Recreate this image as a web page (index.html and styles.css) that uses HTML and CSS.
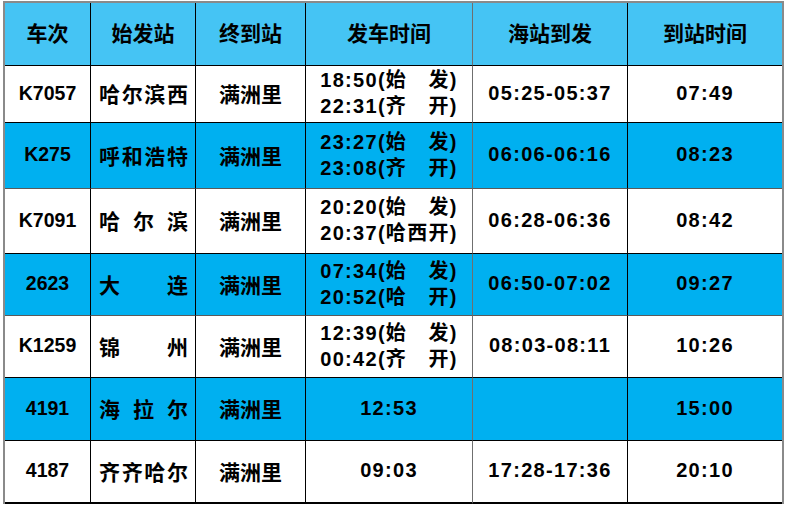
FILE: index.html
```html
<!DOCTYPE html>
<html lang="zh-CN">
<head>
<meta charset="utf-8">
<title>列车时刻表</title>
<link rel="stylesheet" href="styles.css">
</head>
<body>
<div class="wrap">
<table class="tt">
  <thead>
    <tr class="h">
      <th class="c1">车次</th>
      <th class="c2">始发站</th>
      <th class="c3">终到站</th>
      <th class="c4">发车时间</th>
      <th class="c5">海站到发</th>
      <th class="c6">到站时间</th>
    </tr>
  </thead>
  <tbody>
    <tr class="r1">
      <td class="no">K7057</td>
      <td class="st"><span class="dist"><span>哈</span><span>尔</span><span>滨</span><span>西</span></span></td>
      <td class="cj">满洲里</td>
      <td class="dep"><div class="two"><span>18:50(始　发)</span><span>22:31(齐　开)</span></div></td>
      <td class="tm">05:25-05:37</td>
      <td class="tm">07:49</td>
    </tr>
    <tr class="r2 blue">
      <td class="no">K275</td>
      <td class="st"><span class="dist"><span>呼</span><span>和</span><span>浩</span><span>特</span></span></td>
      <td class="cj">满洲里</td>
      <td class="dep"><div class="two"><span>23:27(始　发)</span><span>23:08(齐　开)</span></div></td>
      <td class="tm">06:06-06:16</td>
      <td class="tm">08:23</td>
    </tr>
    <tr class="r3">
      <td class="no">K7091</td>
      <td class="st"><span class="dist"><span>哈</span><span>尔</span><span>滨</span></span></td>
      <td class="cj">满洲里</td>
      <td class="dep"><div class="two"><span>20:20(始　发)</span><span>20:37(哈西开)</span></div></td>
      <td class="tm">06:28-06:36</td>
      <td class="tm">08:42</td>
    </tr>
    <tr class="r4 blue">
      <td class="no">2623</td>
      <td class="st"><span class="dist"><span>大</span><span>连</span></span></td>
      <td class="cj">满洲里</td>
      <td class="dep"><div class="two"><span>07:34(始　发)</span><span>20:52(哈　开)</span></div></td>
      <td class="tm">06:50-07:02</td>
      <td class="tm">09:27</td>
    </tr>
    <tr class="r5">
      <td class="no">K1259</td>
      <td class="st"><span class="dist"><span>锦</span><span>州</span></span></td>
      <td class="cj">满洲里</td>
      <td class="dep"><div class="two"><span>12:39(始　发)</span><span>00:42(齐　开)</span></div></td>
      <td class="tm">08:03-08:11</td>
      <td class="tm">10:26</td>
    </tr>
    <tr class="r6 blue">
      <td class="no">4191</td>
      <td class="st"><span class="dist"><span>海</span><span>拉</span><span>尔</span></span></td>
      <td class="cj">满洲里</td>
      <td class="tm">12:53</td>
      <td class="tm"></td>
      <td class="tm">15:00</td>
    </tr>
    <tr class="r7">
      <td class="no">4187</td>
      <td class="st"><span class="dist"><span>齐</span><span>齐</span><span>哈</span><span>尔</span></span></td>
      <td class="cj">满洲里</td>
      <td class="tm">09:03</td>
      <td class="tm">17:28-17:36</td>
      <td class="tm">20:10</td>
    </tr>
  </tbody>
</table>
</div>
</body>
</html>
```

FILE: styles.css
```css
html, body {
  margin: 0;
  padding: 0;
  background: #ffffff;
}
.wrap {
  padding: 1px 0 0 3px;
}
.tt {
  border-collapse: separate;
  border-spacing: 0;
  table-layout: fixed;
  width: 781px;
  border-top: 2px solid #8a8a8a;
  border-left: 2px solid #8a8a8a;
  border-right: 2px solid #8a8a8a;
  font-family: "Noto Sans CJK SC", sans-serif;
  font-weight: 700;
  color: #000;
}
.tt th, .tt td {
  box-sizing: border-box;
  padding: 0;
  border-right: 1px solid #000;
  border-bottom: 1px solid #000;
  text-align: center;
  vertical-align: middle;
  overflow: hidden;
  white-space: nowrap;
}
.tt th:last-child, .tt td:last-child {
  border-right: none;
}
.tt th.c4, .tt tr td:nth-child(4) {
  border-right-color: #6f6f6f;
}
.c1 { width: 86px; }
.c2 { width: 105px; }
.c3 { width: 110px; }
.c4 { width: 167px; }
.c5 { width: 155px; }
.c6 { width: 154px; }

.h th {
  height: 63px;
  background: #45c4f4;
  font-size: 21px;
  font-weight: 700;
  line-height: 1;
  padding-bottom: 3px;
}
.r1 td { height: 57px; }
.r2 td { height: 66px; }
.r3 td { height: 65px; }
.r4 td { height: 62px; }
.r5 td { height: 62px; }
.r6 td { height: 63px; }
.r7 td { height: 63px; border-bottom-width: 2px; }
.r2 td, .r4 td { border-bottom-color: #5a5a5a; }

.blue td { background: #00b0f0; }

.tt td {
  padding-bottom: 2px;
}
.no {
  font-family: "Liberation Sans", Arial, sans-serif;
  font-size: 19.5px;
}
.tt td.st {
  padding-left: 8px;
  padding-right: 7px;
  font-size: 21px;
}
.dist {
  display: flex;
  justify-content: space-between;
}
.cj {
  font-size: 21px;
}
.tm, .dep {
  font-family: "Liberation Sans", "Noto Sans CJK SC", sans-serif;
  font-size: 20px;
  letter-spacing: 1.3px;
}
.two {
  display: flex;
  flex-direction: column;
  align-items: center;
  line-height: 26px;
}
```
